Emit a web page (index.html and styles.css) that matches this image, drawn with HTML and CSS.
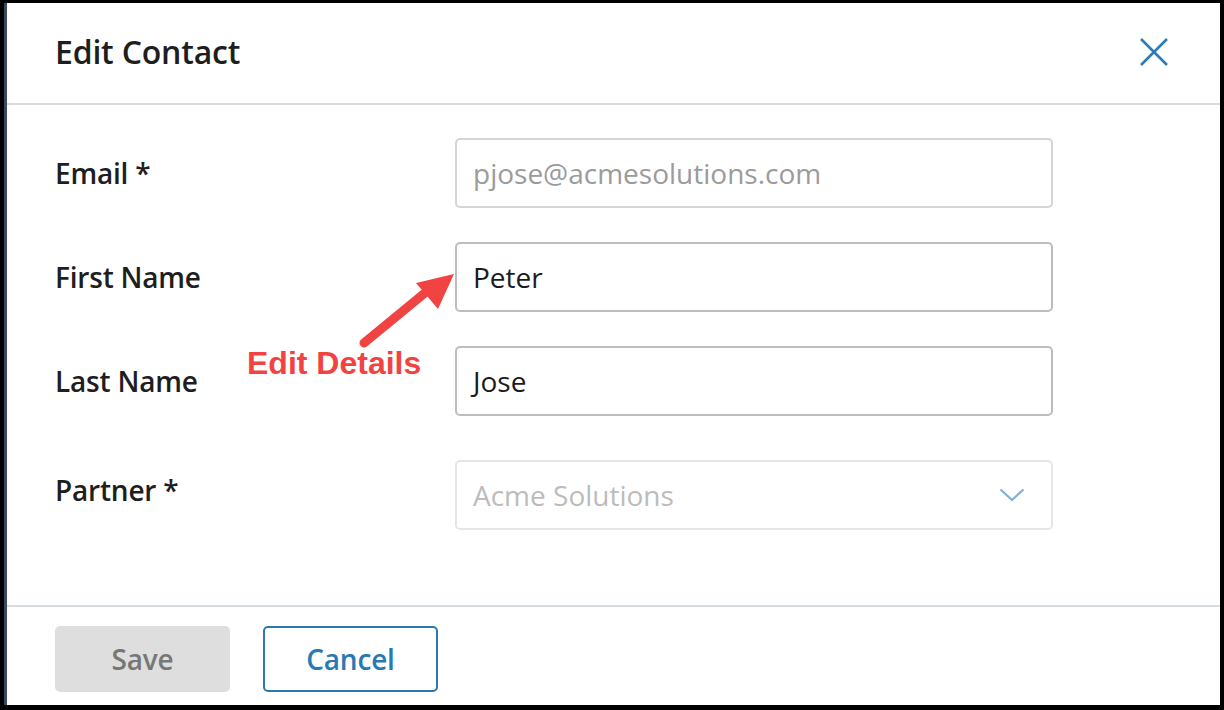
FILE: index.html
```html
<!DOCTYPE html>
<html lang="en">
<head>
<meta charset="utf-8">
<title>Edit Contact</title>
<link rel="stylesheet" href="styles.css">
</head>
<body>
<div class="dialog">
  <header class="dialog-header">
    <h1 class="dialog-title">Edit Contact</h1>
    <button class="close-btn" aria-label="Close">
      <svg width="28" height="28" viewBox="0 0 28 28"><path d="M1 1 L27 27 M27 1 L1 27" stroke="#2a7db8" stroke-width="2.6" fill="none"/></svg>
    </button>
  </header>
  <div class="dialog-body">
    <div class="form">
      <div class="row">
        <label class="label">Email *</label>
        <div class="field field-disabled"><span class="value value-muted">pjose@acmesolutions.com</span></div>
      </div>
      <div class="row">
        <label class="label">First Name</label>
        <div class="field field-active"><span class="value">Peter</span></div>
      </div>
      <div class="row">
        <label class="label">Last Name</label>
        <div class="field field-active"><span class="value">Jose</span></div>
      </div>
      <div class="row row-partner">
        <label class="label label-partner">Partner *</label>
        <div class="field field-select"><span class="value value-light">Acme Solutions</span>
          <svg class="chevron" width="26" height="14" viewBox="0 0 26 14"><path d="M1.5 1.5 L13 12 L24.5 1.5" stroke="#7fb0d8" stroke-width="2.2" fill="none"/></svg>
        </div>
      </div>
    </div>
    <div class="annotation">
      <svg class="arrow" width="110" height="90" viewBox="0 0 110 90">
        <line x1="10" y1="75" x2="72" y2="24" stroke="#f24343" stroke-width="9" stroke-linecap="round"/>
        <polygon points="100,6 62,15 84,41" fill="#f24343"/>
      </svg>
      <span class="annotation-text">Edit Details</span>
    </div>
  </div>
  <footer class="dialog-footer">
    <button class="btn btn-save">Save</button>
    <button class="btn btn-cancel">Cancel</button>
  </footer>
</div>
</body>
</html>
```
FILE: styles.css
```css
* { box-sizing: border-box; }
html, body { margin: 0; padding: 0; }
body {
  background: #000;
  width: 1224px;
  height: 710px;
  padding: 3px 4px 5px 4px;
  font-family: "Open Sans", "Noto Sans", sans-serif;
}
.dialog {
  width: 1216px;
  height: 702px;
  background: #fff;
  border-left: 3px solid #3a4960;
  display: flex;
  flex-direction: column;
}
.dialog-header {
  height: 102px;
  border-bottom: 2px solid #d6dce1;
  display: flex;
  align-items: center;
  justify-content: space-between;
  padding: 0 52px 0 48px;
  flex: none;
}
.dialog-title {
  margin: 0;
  font-size: 32px;
  font-weight: 600;
  color: #1e1e1e;
  letter-spacing: -0.2px;
  margin-top: -3px;
}
.close-btn {
  border: 0;
  background: none;
  padding: 0;
  width: 28px;
  height: 28px;
  display: flex;
  margin-top: -2px;
}
.dialog-body {
  flex: 1;
  position: relative;
  padding: 33px 48px 0 48px;
}
.form {
  display: flex;
  flex-direction: column;
  gap: 34px;
}
.row {
  display: grid;
  grid-template-columns: 400px 598px;
  align-items: center;
}
.row-partner { margin-top: 10px; }
.label {
  font-size: 28px;
  font-weight: 600;
  color: #1e1e1e;
  letter-spacing: -0.2px;
}
.label-partner { margin-top: -10px; }
.field {
  height: 70px;
  border-radius: 5px;
  border: 2px solid #d4d4d4;
  display: flex;
  align-items: center;
  padding: 0 26px 0 16px;
  justify-content: space-between;
}
.field-active { border-color: #bdbdbd; }
.field-select { border-color: #e6e6e6; }
.value {
  font-size: 28px;
  color: #1b1b1b;
}
.value-muted { color: #9b9b9b; }
.value-light { color: #bcbcbc; }
.chevron { display: block; }
.annotation {
  position: absolute;
  left: 0;
  top: 0;
}
.arrow {
  position: absolute;
  left: 347px;
  top: 163px;
}
.annotation-text {
  position: absolute;
  left: 240px;
  top: 240px;
  white-space: nowrap;
  font-family: "Liberation Sans", Arial, sans-serif;
  font-weight: 700;
  font-size: 32px;
  color: #f24343;
}
.dialog-footer {
  flex: none;
  height: 100px;
  border-top: 2px solid #d6dce1;
  padding: 19px 48px 0 48px;
  display: flex;
  gap: 33px;
  align-items: flex-start;
}
.btn {
  width: 175px;
  height: 66px;
  border-radius: 5px;
  font-family: "Open Sans", "Noto Sans", sans-serif;
  font-size: 28px;
  font-weight: 600;
  padding: 0;
  letter-spacing: -0.2px;
}
.btn-save {
  background: #dedede;
  border: 0;
  color: #777;
}
.btn-cancel {
  background: #fff;
  border: 2px solid #2a7ab2;
  color: #2a7ab2;
}
```
